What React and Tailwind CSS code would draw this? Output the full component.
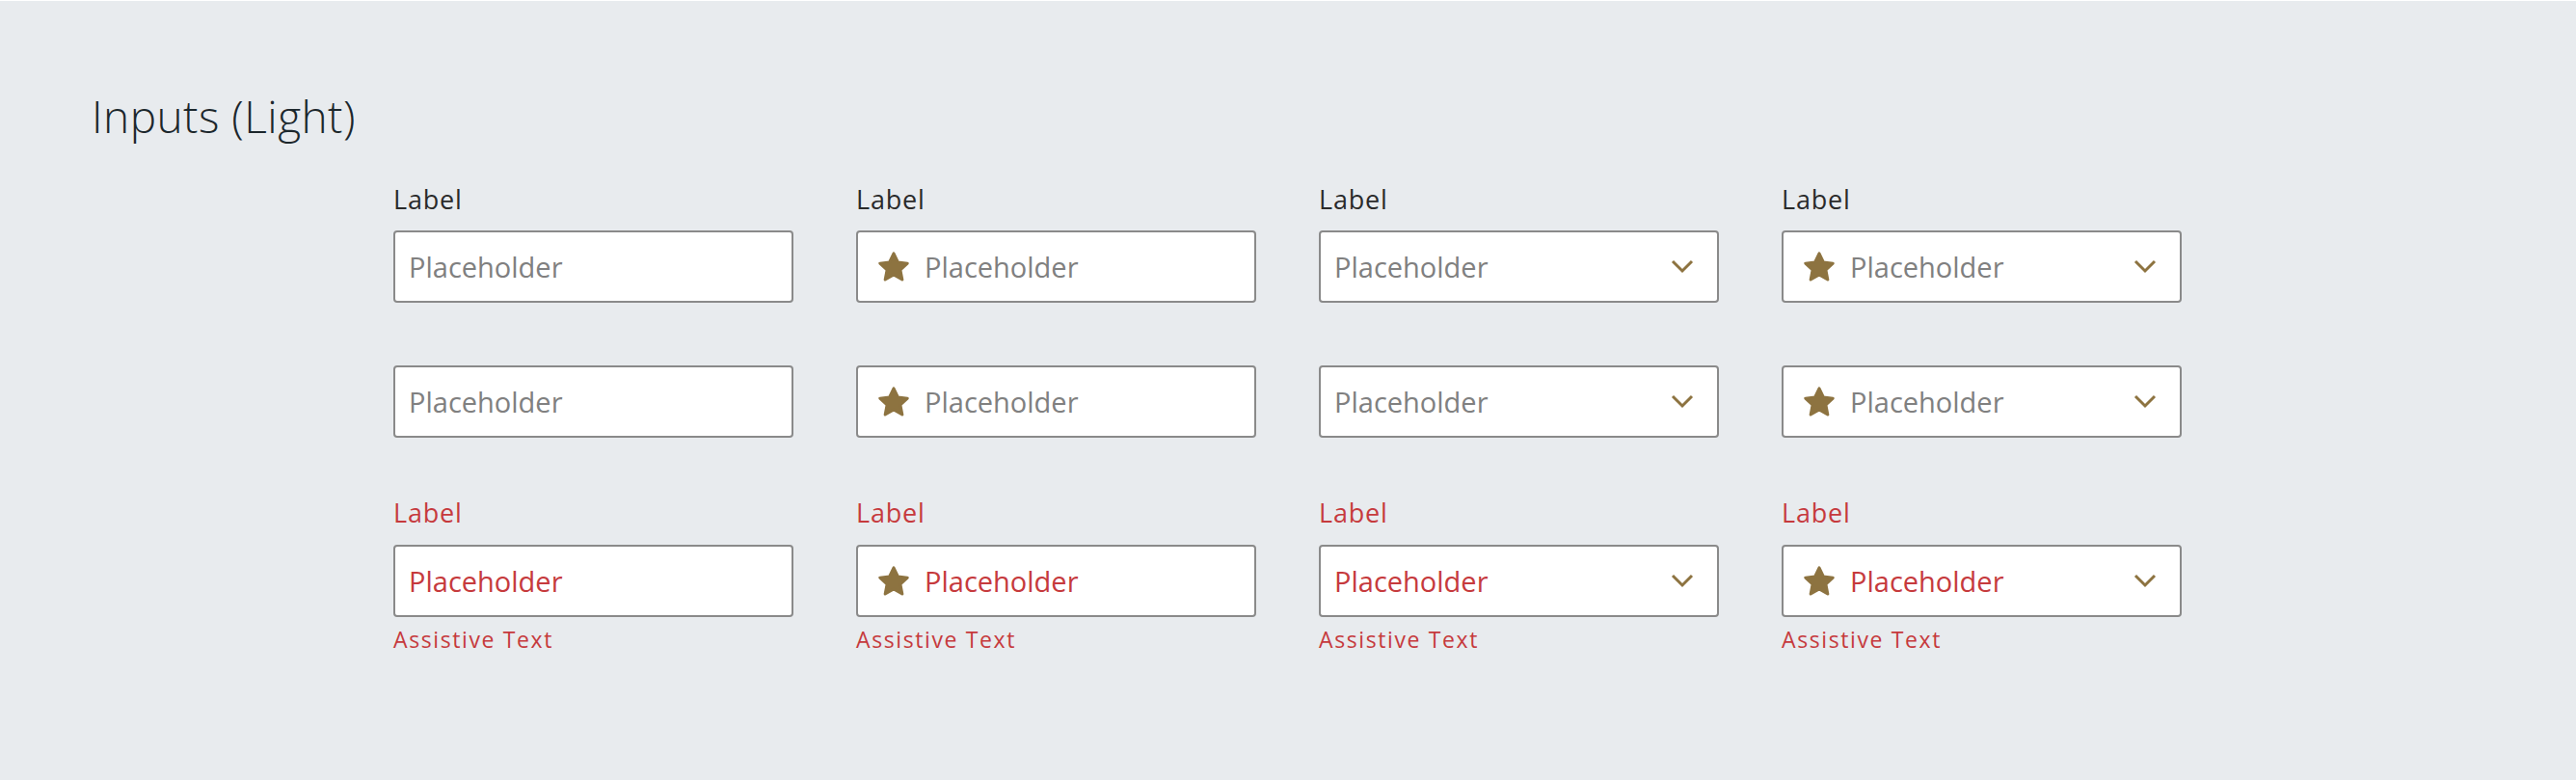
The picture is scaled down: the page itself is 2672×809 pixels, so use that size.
import React from 'react';

const font = { fontFamily: '"Open Sans", Lato, sans-serif' };

const Star = () => (
  <svg width="36" height="35" viewBox="0 0 24 23.3" className="shrink-0">
    <path
      d="M12 2.5l2.9 6.1 6.6.8-4.9 4.6 1.3 6.6L12 17.3l-5.9 3.3 1.3-6.6-4.9-4.6 6.6-.8z"
      fill="#8d7340"
      stroke="#8d7340"
      strokeWidth="2"
      strokeLinejoin="round"
    />
  </svg>
);

const Chevron = () => (
  <svg width="24" height="15" viewBox="0 0 24 15" className="shrink-0">
    <polyline points="2,2 12,12 22,2" fill="none" stroke="#8d7340" strokeWidth="3" />
  </svg>
);

const Field = ({ star, select, error }) => (
  <div
    className={`flex items-center h-[75px] w-[415px] bg-white border-2 border-[#8a8a8a] rounded-[4px] ${
      star ? 'pl-[19px]' : 'pl-[14px]'
    } pr-6`}
  >
    {star && <Star />}
    <span
      className={`flex-1 text-[29px] font-normal leading-none ${star ? 'ml-[14px]' : ''} ${
        error ? 'text-[#c63a3d]' : 'text-[#808080]'
      }`}
    >
      Placeholder
    </span>
    {select && <Chevron />}
  </div>
);

const variants = [
  { star: false, select: false },
  { star: true, select: false },
  { star: false, select: true },
  { star: true, select: true },
];

const Label = ({ error, className }) => (
  <div
    className={`text-[27px] font-normal leading-none tracking-[0.03em] ${className} ${
      error ? 'text-[#c63a3d]' : 'text-[#2a2a2a]'
    }`}
  >
    Label
  </div>
);

export default function App() {
  return (
    <div className="w-full h-[809px] bg-[#e8ebee] border-t border-white" style={font}>
      <h1 className="pl-[95px] pt-[96px] text-[46px] font-light leading-none tracking-[0.01em] text-[#1c272c]">
        Inputs (Light)
      </h1>

      <div className="pl-[408px] mt-[50px] flex flex-col">
        {/* labelled */}
        <div className="grid grid-cols-[415px_415px_415px_415px] gap-x-[65px]">
          {variants.map((v, i) => (
            <div key={i} className="flex flex-col">
              <Label className="mb-[19px]" />
              <Field {...v} />
            </div>
          ))}
        </div>

        {/* no label */}
        <div className="grid grid-cols-[415px_415px_415px_415px] gap-x-[65px] mt-[65px]">
          {variants.map((v, i) => (
            <Field key={i} {...v} />
          ))}
        </div>

        {/* error */}
        <div className="grid grid-cols-[415px_415px_415px_415px] gap-x-[65px] mt-[64px]">
          {variants.map((v, i) => (
            <div key={i} className="flex flex-col">
              <Label error className="mb-[20px]" />
              <Field {...v} error />
              <div className="mt-[12px] text-[23px] font-normal leading-none tracking-[0.07em] text-[#c63a3d]">
                Assistive Text
              </div>
            </div>
          ))}
        </div>
      </div>
    </div>
  );
}
